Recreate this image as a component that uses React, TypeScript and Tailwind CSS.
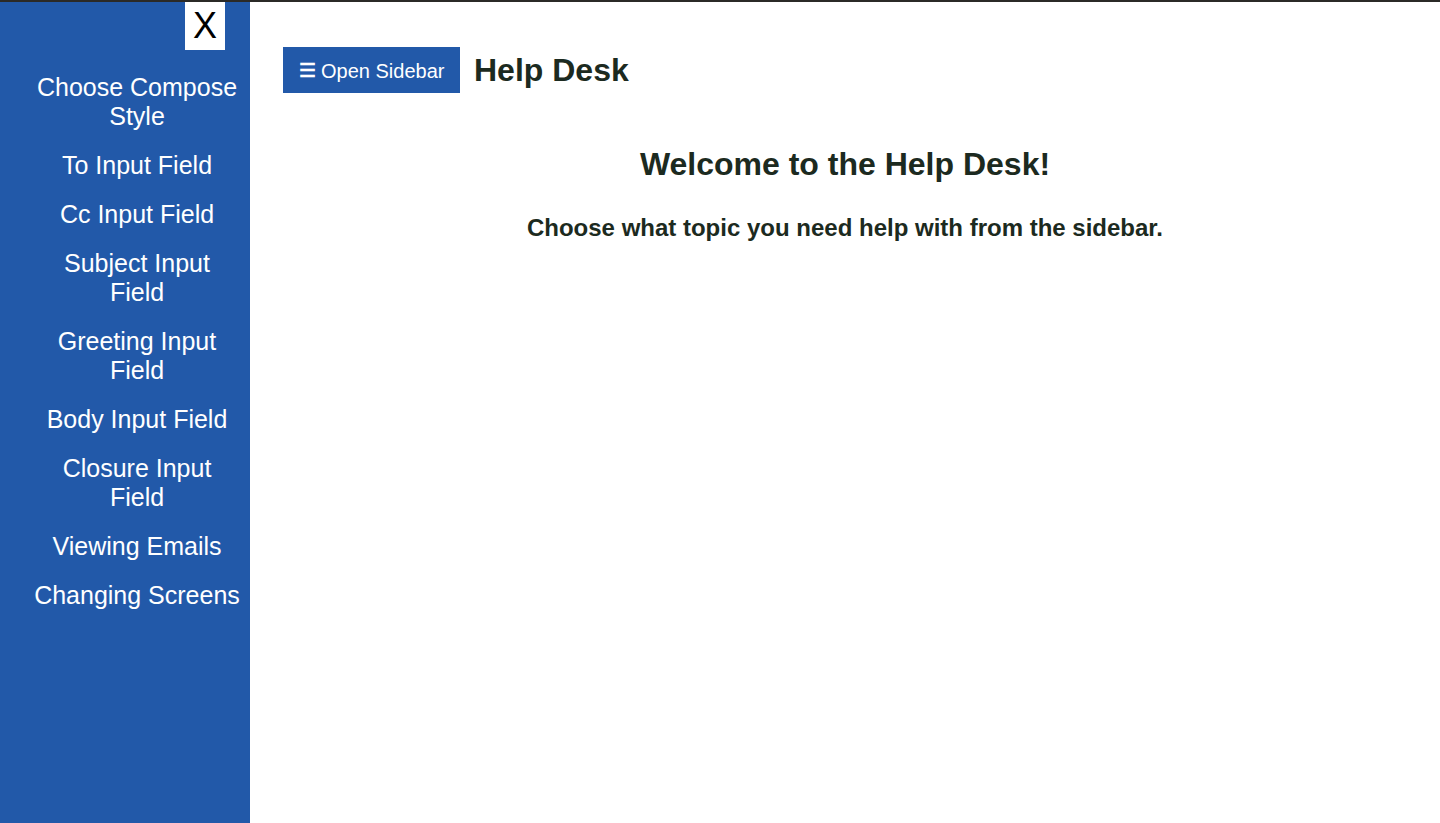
import React from "react";

const items = [
  "Choose Compose Style",
  "To Input Field",
  "Cc Input Field",
  "Subject Input Field",
  "Greeting Input Field",
  "Body Input Field",
  "Closure Input Field",
  "Viewing Emails",
  "Changing Screens",
];

export default function App() {
  return (
    <div className="min-h-screen border-t-2 border-[#2b2a27] flex bg-white font-['Liberation_Sans',Arial,Helvetica,sans-serif]">
      <aside className="w-[250px] shrink-0 h-[821px] bg-[#2259a9]">
        <div className="flex justify-end pr-[25px]">
          <button className="w-[40px] h-[48px] bg-white text-black text-[36px] leading-[48px] text-center">
            X
          </button>
        </div>
        <nav className="mt-[13px] flex flex-col">
          {items.map((t) => (
            <a
              key={t}
              href="#"
              className="block pl-[34px] pr-[10px] py-[10px] text-white text-[25px] leading-[29px] text-center"
            >
              {t}
            </a>
          ))}
        </nav>
      </aside>
      <main className="flex-1 pl-[33px] pt-[45px]">
        <div className="flex items-center gap-[14px]">
          <button className="h-[46px] w-[177px] bg-[#2259a9] text-white flex items-center pl-[16px] pt-[2px]">
            <span className="mr-[5px] text-[19px] font-bold">☰</span>
            <span className="text-[20px]">Open Sidebar</span>
          </button>
          <h1 className="text-[32px] font-bold text-[#1c2a20] leading-[37px]">Help Desk</h1>
        </div>
        <div className="pr-[33px] text-center text-[#1c2a20]">
          <h2 className="mt-[53px] text-[32px] font-bold leading-[37px]">Welcome to the Help Desk!</h2>
          <p className="mt-[31px] text-[24px] font-bold leading-[28px]">
            Choose what topic you need help with from the sidebar.
          </p>
        </div>
      </main>
    </div>
  );
}
